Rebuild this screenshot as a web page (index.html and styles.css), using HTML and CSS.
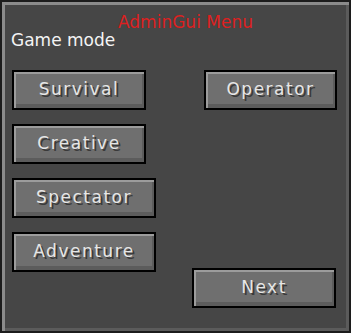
FILE: index.html
```html
<!DOCTYPE html>
<html lang="en">

<head>
    <meta charset="UTF-8">
    <meta name="viewport" content="width=device-width, initial-scale=1.0">
    <link rel="stylesheet" href="styles.css">
    <title>AdminGui</title>
</head>

<body>
    <div class="panel">
        <div class="title">AdminGui Menu</div>
        <div class="label">Game mode</div>
        <div class="columns">
            <div class="col-left">
                <div class="btn w134">Survival</div>
                <div class="btn w134">Creative</div>
                <div class="btn w144">Spectator</div>
                <div class="btn w144">Adventure</div>
            </div>
            <div class="col-right">
                <div class="btn w133">Operator</div>
                <div class="btn w144 next">Next</div>
            </div>
        </div>
    </div>
</body>

</html>
```

FILE: styles.css
```css
* {
    padding: 0;
    margin: 0;
    box-sizing: border-box;
}

body {
    background-color: #1c1c1c;
    font-family: "DejaVu Sans", sans-serif;
}

.panel {
    width: 351px;
    height: 333px;
    border: 2px solid #1c1c1c;
    background-color: #464646;
    box-shadow: inset 3px 3px 0 #8b8b8b, inset -3px -3px 0 #5b5b5b;
}

.title {
    padding-top: 11px;
    padding-left: 116px;
    font-size: 17px;
    line-height: 18px;
    color: #dd2020;
}

.label {
    padding-left: 9px;
    font-size: 17px;
    line-height: 18px;
    color: #f4f4f4;
}

.columns {
    display: flex;
    justify-content: space-between;
    padding: 21px 12px 0 10px;
}

.col-left {
    display: flex;
    flex-direction: column;
    gap: 14px;
}

.col-right {
    display: flex;
    flex-direction: column;
    align-items: flex-end;
    height: 238px;
}

.btn {
    height: 40px;
    display: flex;
    align-items: center;
    justify-content: center;
    padding-bottom: 2px;
    border: 2px solid #000;
    background-color: #6f6f6f;
    box-shadow: inset 2px 2px 0 #9c9c9c, inset -2px -4px 0 #5c5c5c;
    font-size: 17px;
    line-height: 18px;
    letter-spacing: 1.5px;
    color: #e6e6e6;
    text-shadow: 2px 2px 0 #3a3a3a;
}

.w133 {
    width: 133px;
}

.w134 {
    width: 134px;
}

.w144 {
    width: 144px;
}

.next {
    margin-top: auto;
    margin-right: 1px;
}
```
